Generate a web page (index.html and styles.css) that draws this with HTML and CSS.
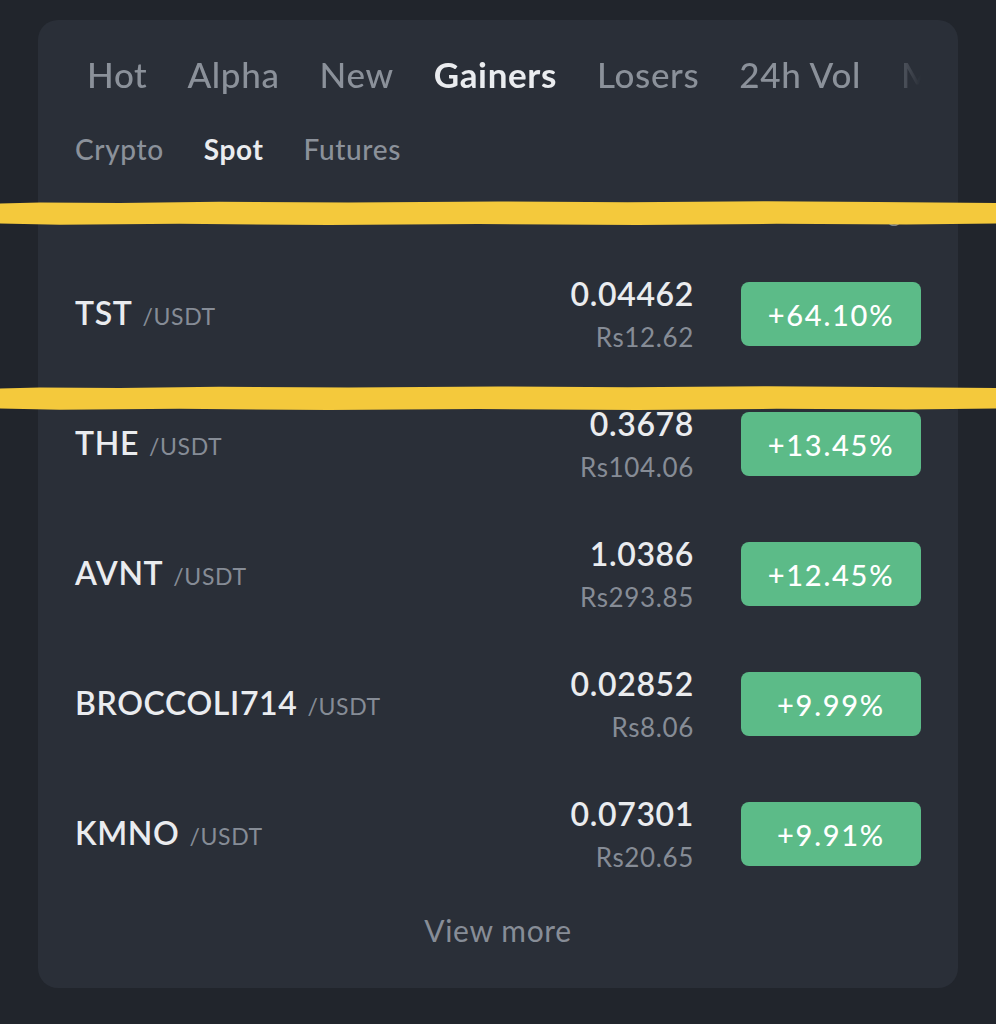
FILE: index.html
```html
<!DOCTYPE html>
<html lang="en">
<head>
<meta charset="utf-8">
<title>Gainers</title>
<link rel="stylesheet" href="styles.css">
</head>
<body>
<div class="page">
  <div class="card">
    <div class="tabs">
      <span class="tab">Hot</span>
      <span class="tab">Alpha</span>
      <span class="tab">New</span>
      <span class="tab active">Gainers</span>
      <span class="tab">Losers</span>
      <span class="tab">24h Vol</span>
      <span class="tab">Market Cap</span>
    </div>
    <div class="subtabs">
      <span class="subtab">Crypto</span>
      <span class="subtab active">Spot</span>
      <span class="subtab">Futures</span>
    </div>
    <div class="header">
      <span class="h-name">Name</span>
      <span class="h-price">Last Price</span>
      <span class="h-chg">24h Chg%</span>
    </div>
    <div class="rows">
      <div class="row">
        <div class="pair"><span class="base">TST</span><span class="quote">/USDT</span></div>
        <div class="price"><span class="last">0.04462</span><span class="fiat">Rs12.62</span></div>
        <div class="badge">+64.10%</div>
      </div>
      <div class="row">
        <div class="pair"><span class="base">THE</span><span class="quote">/USDT</span></div>
        <div class="price"><span class="last">0.3678</span><span class="fiat">Rs104.06</span></div>
        <div class="badge">+13.45%</div>
      </div>
      <div class="row">
        <div class="pair"><span class="base">AVNT</span><span class="quote">/USDT</span></div>
        <div class="price"><span class="last">1.0386</span><span class="fiat">Rs293.85</span></div>
        <div class="badge">+12.45%</div>
      </div>
      <div class="row">
        <div class="pair"><span class="base">BROCCOLI714</span><span class="quote">/USDT</span></div>
        <div class="price"><span class="last">0.02852</span><span class="fiat">Rs8.06</span></div>
        <div class="badge">+9.99%</div>
      </div>
      <div class="row">
        <div class="pair"><span class="base">KMNO</span><span class="quote">/USDT</span></div>
        <div class="price"><span class="last">0.07301</span><span class="fiat">Rs20.65</span></div>
        <div class="badge">+9.91%</div>
      </div>
    </div>
    <div class="more">View more</div>
  </div>
  <div class="stripe stripe-1"></div>
  <div class="stripe stripe-2"></div>
</div>
</body>
</html>
```

FILE: styles.css
```css
* { box-sizing: border-box; }

html, body {
  margin: 0;
  background: #21252c;
}

body {
  font-family: "Lato", "Open Sans", sans-serif;
  color: #eaecef;
  letter-spacing: 0.04em;
}

.page {
  position: relative;
  min-height: 1024px;
  padding: 20px 38px 36px;
}

.card {
  background: #2a2f38;
  border-radius: 20px;
  height: 968px;
  padding: 33px 37px 0;
  overflow: hidden;
}

.tabs {
  display: flex;
  gap: 40px;
  padding-left: 12px;
  white-space: nowrap;
  overflow: hidden;
  font-size: 35px;
  line-height: 42px;
  font-weight: 500;
  color: #8b919a;
  -webkit-mask-image: linear-gradient(to right, #000 calc(100% - 48px), rgba(0,0,0,0.25) calc(100% - 12px), transparent 100%);
  mask-image: linear-gradient(to right, #000 calc(100% - 48px), rgba(0,0,0,0.25) calc(100% - 12px), transparent 100%);
}

.tab.active {
  color: #eaecef;
  font-weight: 700;
}

.subtabs {
  display: flex;
  gap: 40px;
  margin-top: 37px;
  font-size: 28px;
  line-height: 34px;
  font-weight: 500;
  color: #8b919a;
}

.subtab.active {
  color: #eaecef;
  font-weight: 700;
}

.header {
  display: flex;
  margin-top: 32px;
  margin-bottom: 22px;
  font-size: 24px;
  line-height: 29px;
  color: #7d838d;
}

.h-name { flex: 1; }
.h-price { width: 250px; text-align: right; }
.h-chg { width: 227px; text-align: right; }

.rows {
  display: flex;
  flex-direction: column;
}

.row {
  height: 130px;
  display: flex;
  align-items: center;
}

.pair {
  flex: 1;
  display: flex;
  align-items: baseline;
  gap: 10px;
  margin-top: -2px;
}

.base {
  font-size: 32px;
  line-height: 38px;
  font-weight: 600;
  color: #eaecef;
}

.quote {
  font-size: 23px;
  color: #868c96;
}

.price {
  display: flex;
  flex-direction: column;
  align-items: flex-end;
  padding-top: 7px;
}

.last {
  font-size: 32px;
  line-height: 38px;
  font-weight: 600;
  color: #eaecef;
}

.fiat {
  font-size: 26px;
  line-height: 48px;
  color: #868c96;
}

.badge {
  width: 180px;
  height: 64px;
  margin-left: 47px;
  border-radius: 8px;
  background: #5cbb88;
  color: #ffffff;
  font-size: 29px;
  font-weight: 500;
  letter-spacing: 0.06em;
  display: flex;
  align-items: center;
  justify-content: center;
}

.more {
  height: 62px;
  display: flex;
  align-items: center;
  justify-content: center;
  font-size: 30px;
  color: #878d97;
}

.stripe {
  position: absolute;
  left: 0;
  right: 0;
  height: 24px;
  background: #f4c93c;
  clip-path: polygon(0 10%, 4% 6%, 12% 8%, 22% 3%, 35% 6%, 50% 2%, 63% 5%, 77% 1%, 88% 4%, 100% 8%, 100% 94%, 91% 98%, 78% 95%, 64% 100%, 48% 96%, 33% 100%, 18% 95%, 6% 99%, 0 94%);
}

.stripe-1 { top: 201px; }
.stripe-2 { top: 386px; }
```
